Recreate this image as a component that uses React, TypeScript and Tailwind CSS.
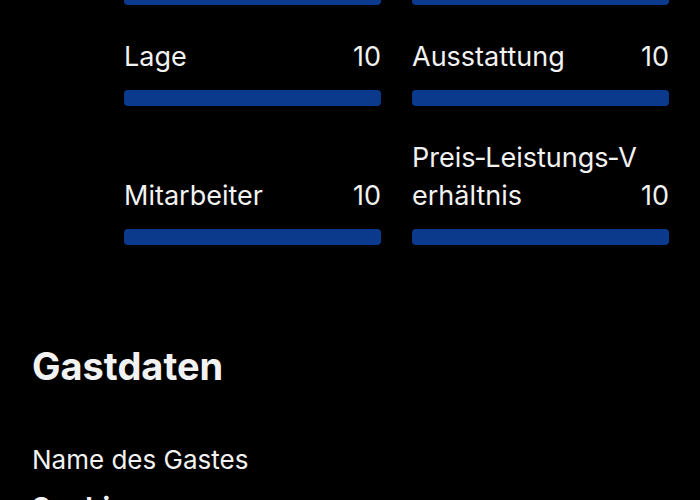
import React from "react";

const rows: { label: string; value: string }[][] = [
  [
    { label: "Lage", value: "10" },
    { label: "Ausstattung", value: "10" },
  ],
  [
    { label: "Mitarbeiter", value: "10" },
    { label: "Preis-Leistungs-Verhältnis", value: "10" },
  ],
];

function Bar() {
  return <div className="h-[16px] rounded-[4px] bg-[#0b3a8c]" />;
}

function Cell({ label, value }: { label: string; value: string }) {
  return (
    <div className="flex flex-col justify-end">
      <div className="flex items-end justify-between">
        <span className="break-all text-[27px] leading-[38px]" style={{ hyphens: "none" }}>
          {label.replace(/-/g, "\u2011")}
        </span>
        <span className="text-[27px] leading-[38px] shrink-0">{value}</span>
      </div>
      <div className="mt-[14px]">
        <Bar />
      </div>
    </div>
  );
}

export default function App() {
  return (
    <div
      className="w-[700px] h-[500px] overflow-hidden bg-black text-[#f2f2f2]"
      style={{ fontFamily: "Inter, 'Noto Sans', sans-serif" }}
    >
      <div className="-mt-[11px] pl-[124px] pr-[31px] flex flex-col gap-[33px]">
        <div className="grid grid-cols-2 gap-x-[31px]">
          <Bar />
          <Bar />
        </div>
        {rows.map((r, i) => (
          <div key={i} className="grid grid-cols-2 gap-x-[31px]">
            {r.map((c) => (
              <Cell key={c.label} {...c} />
            ))}
          </div>
        ))}
      </div>
      <div className="px-[32px] pt-[97px]">
        <h2 className="text-[38px] font-bold leading-[48px]">Gastdaten</h2>
        <div className="mt-[52px] text-[26px] leading-[36px]">Name des Gastes</div>
        <div className="mt-[11px] text-[28px] font-bold leading-[38px]">Sophie</div>
      </div>
    </div>
  );
}
